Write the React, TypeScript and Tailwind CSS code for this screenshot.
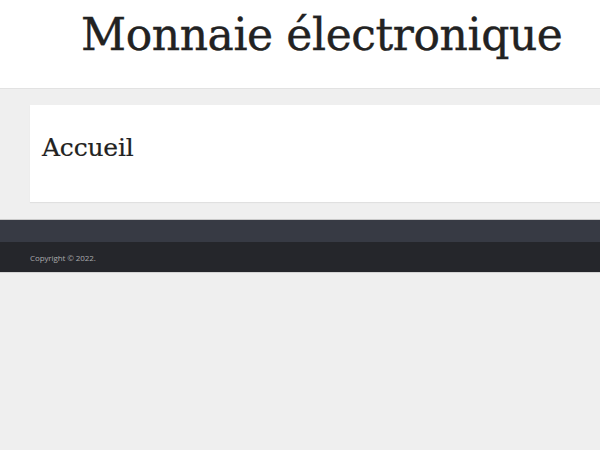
export default function App() {
  return (
    <div className="min-h-[450px] bg-[#efefef]" style={{ fontFamily: "'Open Sans', sans-serif" }}>
      <header className="h-[89px] bg-white border-b border-[#e2e2e2] flex items-start">
        <h1 className="ml-[81px] mt-[7px] text-[44px] leading-[56px] text-[#222] tracking-[-0.4px] whitespace-nowrap" style={{ fontFamily: "'DejaVu Serif', serif", WebkitTextStroke: "0.4px #222" }}>
          Monnaie électronique
        </h1>
      </header>
      <main className="pt-[16px] pb-[17px] pl-[30px]">
        <div className="h-[97px] bg-white shadow-[0_1px_1px_rgba(0,0,0,0.06)] pl-[12px] pt-[27px]">
          <h2 className="text-[25px] leading-[32px] text-[#222] tracking-[-0.2px]" style={{ fontFamily: "'DejaVu Serif', serif", WebkitTextStroke: "0.2px #222" }}>
            Accueil
          </h2>
        </div>
      </main>
      <footer className="border-b border-[#d4d4d4]">
        <div className="h-[23px] bg-[#373a44] border-t border-[#c9c9c9]" />
        <div className="h-[30px] bg-[#25262b] pl-[30px] flex items-center pt-[2px]">
          <span className="text-[8px] leading-[10px] text-[#a9a9ab] tracking-[-0.1px]">Copyright © 2022.</span>
        </div>
      </footer>
    </div>
  );
}
